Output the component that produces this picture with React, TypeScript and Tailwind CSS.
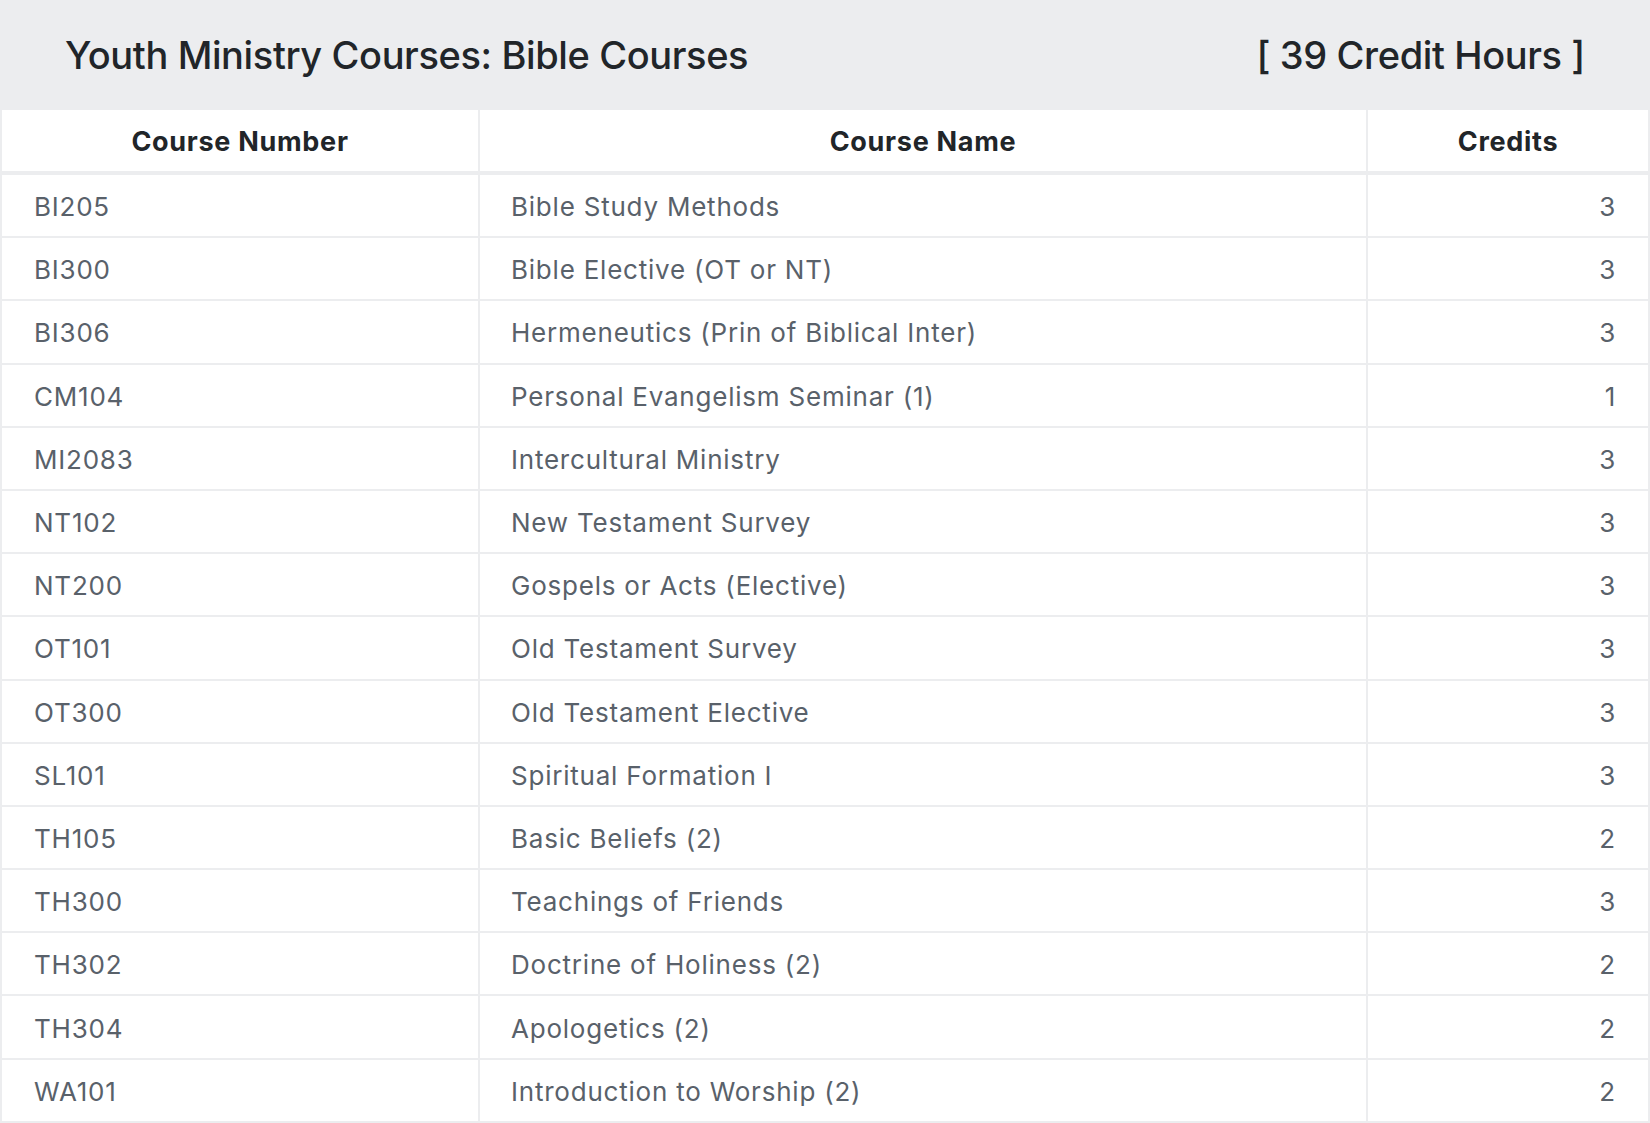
const courses = [
  ['BI205', 'Bible Study Methods', 3],
  ['BI300', 'Bible Elective (OT or NT)', 3],
  ['BI306', 'Hermeneutics (Prin of Biblical Inter)', 3],
  ['CM104', 'Personal Evangelism Seminar (1)', 1],
  ['MI2083', 'Intercultural Ministry', 3],
  ['NT102', 'New Testament Survey', 3],
  ['NT200', 'Gospels or Acts (Elective)', 3],
  ['OT101', 'Old Testament Survey', 3],
  ['OT300', 'Old Testament Elective', 3],
  ['SL101', 'Spiritual Formation I', 3],
  ['TH105', 'Basic Beliefs (2)', 2],
  ['TH300', 'Teachings of Friends', 3],
  ['TH302', 'Doctrine of Holiness (2)', 2],
  ['TH304', 'Apologetics (2)', 2],
  ['WA101', 'Introduction to Worship (2)', 2],
] as const;

export default function App() {
  return (
    <div className="min-h-screen bg-white font-['Inter',sans-serif]">
      {/* title bar */}
      <div className="h-[110px] bg-[#ECEDEF] px-[65px] flex items-center justify-between text-[38px] font-medium text-[#212529] tracking-[-0.01em]">
        <h2>Youth Ministry Courses: Bible Courses</h2>
        <span>[ 39 Credit Hours ]</span>
      </div>

      {/* table: gaps on the gray background act as the borders */}
      <div className="bg-[#ECEDEF] px-[2px] pb-[2px] flex flex-col gap-[2px]">
        <div className="grid grid-cols-[476px_886px_1fr] gap-x-[2px] mb-[2px] text-[27px] font-bold tracking-[0.026em] text-[#212529]">
          <div className="h-[61px] pt-[4px] bg-white flex items-center justify-center">Course Number</div>
          <div className="h-[61px] pt-[4px] bg-white flex items-center justify-center">Course Name</div>
          <div className="h-[61px] pt-[4px] bg-white flex items-center justify-center">Credits</div>
        </div>
        {courses.map(([num, name, cr]) => (
          <div key={num} className="grid grid-cols-[476px_886px_1fr] gap-x-[2px] text-[26px] tracking-[0.03em] text-[#59616a]">
            <div className="h-[61.2px] pt-[2px] bg-white flex items-center px-[32px]">{num}</div>
            <div className="h-[61.2px] pt-[2px] bg-white flex items-center px-[31px]">{name}</div>
            <div className="h-[61.2px] pt-[2px] bg-white flex items-center justify-end px-[32px]">{cr}</div>
          </div>
        ))}
      </div>
    </div>
  );
}
